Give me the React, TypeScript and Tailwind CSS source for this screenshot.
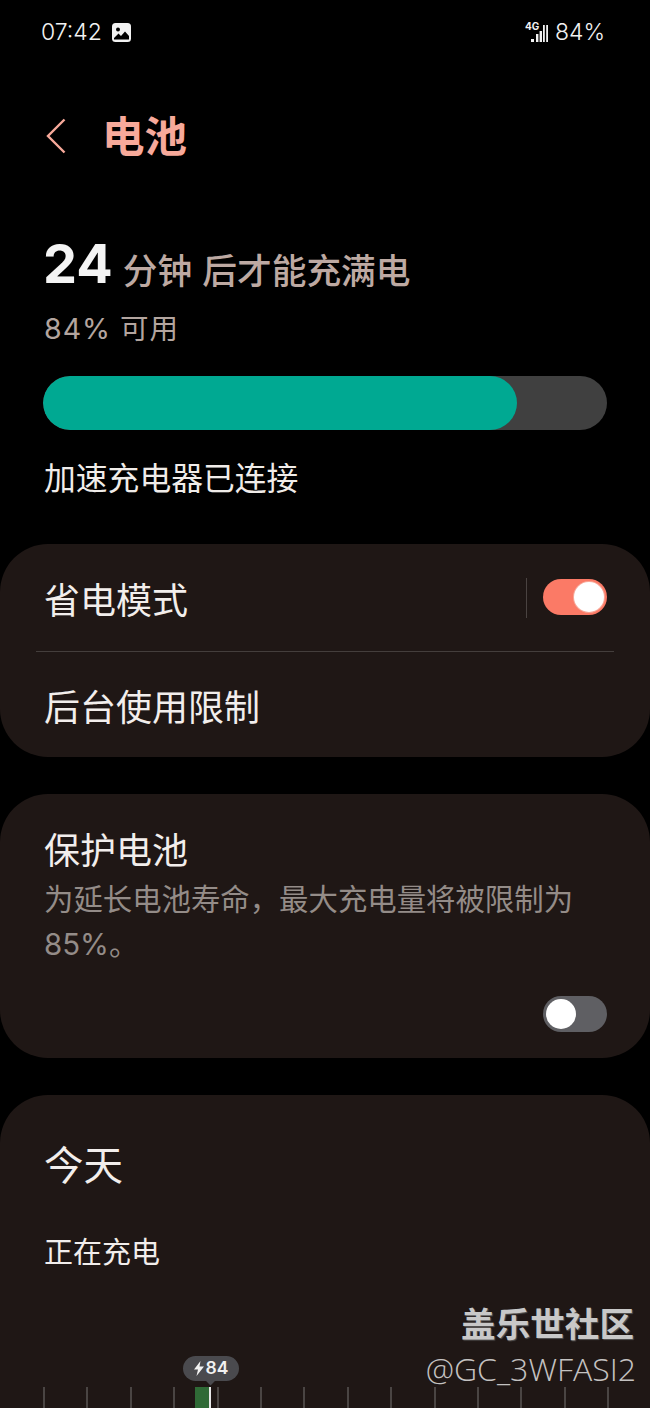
const cjk = "font-['Inter','Noto_Sans_CJK_SC',sans-serif]";

function Toggle({ on }: { on: boolean }) {
  return (
    <div
      className={`flex h-9 w-16 items-center rounded-full px-[3px] ${
        on ? "justify-end bg-[#fb7a66]" : "justify-start bg-[#5f5f63]"
      }`}
    >
      <div className={`h-[30px] w-[30px] rounded-full bg-white ${on ? "shadow-[0_0_0_1px_#f7a99a]" : ""}`} />
    </div>
  );
}

const ticks = Array.from({ length: 14 });

export default function App() {
  return (
    <div className={`relative h-[1408px] w-[650px] overflow-hidden bg-black ${cjk}`}>
      {/* status bar */}
      <div className="flex h-[64px] items-center justify-between pl-[41px] pr-[45px] text-[23px] font-light text-[#f2f2f2]">
        <div className="flex items-center gap-[10px]">
          <span>07:42</span>
          <svg width="19" height="19" viewBox="0 0 19 19">
            <rect width="19" height="19" rx="3.5" fill="#f2f2f2" />
            <circle cx="6" cy="6.5" r="2" fill="#000" />
            <path d="M2 15 6.5 10.5 9 13 13 8.5 17 13V16.5H2Z" fill="#000" />
          </svg>
        </div>
        <div className="flex items-center gap-[6px]">
          <div className="relative h-[20px] w-[24px]">
            <span className="absolute left-0 top-[-2px] text-[10px] font-bold leading-[12px]">4G</span>
            <svg className="absolute bottom-0 left-[6px]" width="18" height="17" viewBox="0 0 18 17">
              <path d="M0 14h3v3H0zM5 9h2.4v8H5zM8.6 6h2.4v11H8.6zM12 0h1.8v17H12zM15.2 0H17v17h-1.8z" fill="#f2f2f2" />
            </svg>
          </div>
          <span>84%</span>
        </div>
      </div>

      {/* header */}
      <div className="mt-[47px] flex h-[52px] items-center pl-[46px]">
        <svg className="mt-[-3px]" width="20" height="36" viewBox="0 0 20 36" fill="none">
          <path d="M18.5 1.5 2 18l16.5 16.5" stroke="#f7a99a" strokeWidth="2.4" />
        </svg>
        <h1 className="ml-[36px] text-[42.5px] font-bold leading-[52px] text-[#f7a99a]">电池</h1>
      </div>

      {/* charging summary */}
      <div className="px-[44px]">
        <div className="mt-[68px] flex h-[66px] items-end">
          <span className="ml-[-1px] text-[54px] font-bold leading-[66px] text-[#f4f4f4]">24</span>
          <span className="mb-[4px] ml-[10px] text-[34.7px] font-medium leading-[44px] text-[#bda9a2] [word-spacing:1px]">分钟 后才能充满电</span>
        </div>
        <p className="mt-[12px] text-[28.5px] leading-[40px] tracking-[1px] text-[#b3a59f]">84% 可用</p>
        <div className="ml-[-1px] mt-[27px] h-[54px] w-[564px] overflow-hidden rounded-full bg-[#404040]">
          <div className="h-full w-[474px] rounded-full bg-[#00a992]" />
        </div>
        <p className="mt-[27px] text-[31.8px] leading-[44px] text-[#f0ece9]">加速充电器已连接</p>
      </div>

      {/* power saving */}
      <section className="mt-[43px] rounded-[48px] bg-[#1f1715]">
        <div className="flex h-[107px] items-center pl-[44px] pr-[43px]">
          <span className="mt-[7px] flex-1 text-[36px] leading-[48px] text-[#f2eeec]">省电模式</span>
          <div className="mr-[16px] h-[40px] w-px bg-[#4a4341]" />
          <div className="mt-[-2px]">
            <Toggle on />
          </div>
        </div>
        <div className="mx-[36px] h-px bg-[#443e3c]" />
        <div className="flex h-[105px] items-center pl-[44px] pt-[7px] text-[36px] leading-[48px] text-[#f2eeec]">后台使用限制</div>
      </section>

      {/* battery protection */}
      <section className="mt-[37px] h-[264px] rounded-[48px] bg-[#1f1715] pl-[44px] pr-[43px] pt-[33px]">
        <h2 className="text-[36px] leading-[48px] text-[#f2eeec]">保护电池</h2>
        <p className="mt-[2px] text-[29.4px] leading-[45px] text-[#948c88]">
          为延长电池寿命，最大充电量将被限制为
          <br />
          85%。
        </p>
        <div className="mt-[29px] flex justify-end">
          <Toggle on={false} />
        </div>
      </section>

      {/* today */}
      <section className="mt-[37px] h-[400px] rounded-[48px] bg-[#1f1715] pt-[45px]">
        <h2 className="pl-[44px] text-[39.5px] leading-[52px] text-[#f2eeec]">今天</h2>
        <p className="mt-[41px] pl-[44px] text-[29px] leading-[40px] text-[#f2eeec]">正在充电</p>
        <div className="relative mt-[114px] h-[40px] px-[43px]">
          <div className="flex gap-[41.4px]">
            {ticks.map((_, i) => (
              <div key={i} className="h-[40px] w-[2px] shrink-0 bg-[#4a4543]" />
            ))}
          </div>
          <div className="absolute left-[195px] top-0 h-[40px] w-[14px] bg-[#2f6a36]" />
          <div className="absolute left-[209px] top-0 h-[40px] w-[2px] bg-[#e8e8e8]" />
          <div className="absolute left-[183px] top-[-31px] flex h-[25px] w-[56px] items-center justify-center gap-[2px] rounded-full bg-[#4a4a4e] text-[17.5px] font-semibold text-[#f2f2f2]">
            <svg width="10" height="15" viewBox="0 0 10 15">
              <path d="M6.5 0 0 8.5h4L2.5 15 10 5.5H5.5Z" fill="#f2f2f2" />
            </svg>
            84
            <div className="absolute bottom-[-3px] left-[24px] h-[7px] w-[7px] rotate-45 bg-[#4a4a4e]" />
          </div>
        </div>
      </section>

      {/* watermark */}
      <div className="absolute right-[16px] top-[1302px] flex flex-col items-end">
        <span className="text-[34.6px] font-bold leading-[44px] text-[#c8c8c8] [text-shadow:1px_1px_1px_#555]">盖乐世社区</span>
        <span className="mr-[-2px] font-['Open_Sans',sans-serif] text-[32px] font-light leading-[46px] text-[#c4c2c1]">@GC_3WFASI2</span>
      </div>
    </div>
  );
}
